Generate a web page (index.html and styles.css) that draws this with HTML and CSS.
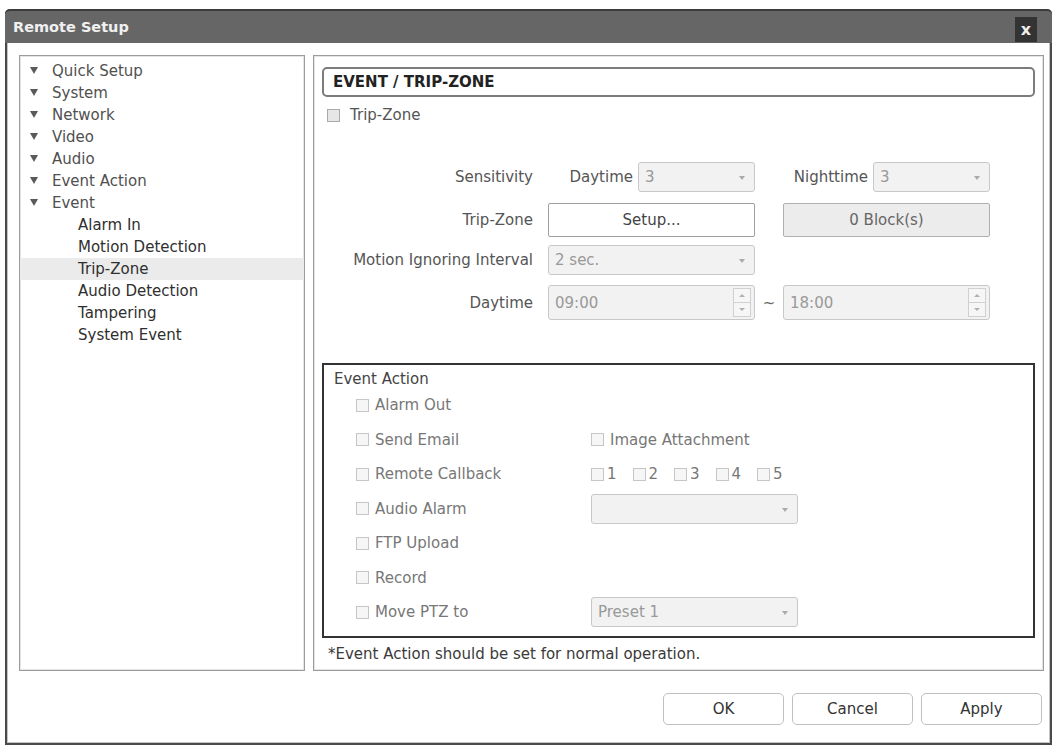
FILE: index.html
```html
<!DOCTYPE html>
<html lang="en">
<head>
    <meta charset="UTF-8">
    <title>Remote Setup</title>
    <link rel="stylesheet" href="styles.css">
</head>
<body>

    <div class="window">
        <div class="titlebar">
            <span class="title">Remote Setup</span>
            <span class="close">x</span>
        </div>

        <div class="content">
            <div class="panels">
                <ul class="tree">
                    <li class="group"><i class="arrow"></i>Quick Setup</li>
                    <li class="group"><i class="arrow"></i>System</li>
                    <li class="group"><i class="arrow"></i>Network</li>
                    <li class="group"><i class="arrow"></i>Video</li>
                    <li class="group"><i class="arrow"></i>Audio</li>
                    <li class="group"><i class="arrow"></i>Event Action</li>
                    <li class="group"><i class="arrow"></i>Event</li>
                    <li class="child">Alarm In</li>
                    <li class="child">Motion Detection</li>
                    <li class="child selected">Trip-Zone</li>
                    <li class="child">Audio Detection</li>
                    <li class="child">Tampering</li>
                    <li class="child">System Event</li>
                </ul>

                <div class="page">
                    <div class="page-head">EVENT / TRIP-ZONE</div>

                    <label class="check enable"><span class="box"></span>Trip-Zone</label>

                    <div class="form">
                        <div class="row row-sens">
                            <div class="lbl">Sensitivity</div>
                            <div class="cell">
                                <span class="sub">Daytime</span>
                                <div class="select short"><span>3</span><i class="caret"></i></div>
                            </div>
                            <div class="cell">
                                <span class="sub">Nighttime</span>
                                <div class="select short"><span>3</span><i class="caret"></i></div>
                            </div>
                        </div>

                        <div class="row row-zone">
                            <div class="lbl">Trip-Zone</div>
                            <div class="cell"><button class="btn-setup">Setup...</button></div>
                            <div class="cell"><div class="blocks">0 Block(s)</div></div>
                        </div>

                        <div class="row row-interval">
                            <div class="lbl">Motion Ignoring Interval</div>
                            <div class="cell">
                                <div class="select"><span>2 sec.</span><i class="caret"></i></div>
                            </div>
                        </div>

                        <div class="row row-time">
                            <div class="lbl">Daytime</div>
                            <div class="cell">
                                <div class="spin"><span>09:00</span><div class="spin-btns"><i class="up"></i><i class="down"></i></div></div>
                            </div>
                            <span class="tilde">~</span>
                            <div class="cell">
                                <div class="spin"><span>18:00</span><div class="spin-btns"><i class="up"></i><i class="down"></i></div></div>
                            </div>
                        </div>
                    </div>

                    <div class="action-box">
                        <div class="action-title">Event Action</div>

                        <div class="act">
                            <label class="check col1"><span class="box"></span>Alarm Out</label>
                        </div>
                        <div class="act">
                            <label class="check col1"><span class="box"></span>Send Email</label>
                            <label class="check"><span class="box"></span>Image Attachment</label>
                        </div>
                        <div class="act">
                            <label class="check col1"><span class="box"></span>Remote Callback</label>
                            <div class="nums">
                                <label class="check"><span class="box"></span>1</label>
                                <label class="check"><span class="box"></span>2</label>
                                <label class="check"><span class="box"></span>3</label>
                                <label class="check"><span class="box"></span>4</label>
                                <label class="check"><span class="box"></span>5</label>
                            </div>
                        </div>
                        <div class="act">
                            <label class="check col1"><span class="box"></span>Audio Alarm</label>
                            <div class="select wide"><span></span><i class="caret"></i></div>
                        </div>
                        <div class="act">
                            <label class="check col1"><span class="box"></span>FTP Upload</label>
                        </div>
                        <div class="act">
                            <label class="check col1"><span class="box"></span>Record</label>
                        </div>
                        <div class="act">
                            <label class="check col1"><span class="box"></span>Move PTZ to</label>
                            <div class="select wide"><span>Preset 1</span><i class="caret"></i></div>
                        </div>
                    </div>

                    <p class="note">*Event Action should be set for normal operation.</p>
                </div>
            </div>

            <div class="buttons">
                <button class="btn">OK</button>
                <button class="btn">Cancel</button>
                <button class="btn">Apply</button>
            </div>
        </div>
    </div>

</body>
</html>
```

FILE: styles.css
```css
* {
    margin: 0;
    padding: 0;
    box-sizing: border-box;
}

body {
    font-family: 'DejaVu Sans', Verdana, sans-serif;
    font-size: 15px;
    background-color: #fff;
    color: #444;
}

/* dialog frame */
.window {
    width: 1047px;
    height: 736px;
    margin: 9px 0 0 5px;
    border: 2px solid #4a4a4a;
    border-top: none;
    border-radius: 5px 5px 0 0;
    box-shadow: inset 1px 0 0 #c4c4c4, inset -1px 0 0 #c4c4c4, inset 0 -1px 0 #c4c4c4;
}

.titlebar {
    height: 34px;
    margin: 0 -2px;
    display: flex;
    align-items: center;
    justify-content: space-between;
    padding: 0 15px 0 8px;
    background-color: #666;
    border-top: 2px solid #3c3c3c;
    border-radius: 5px 5px 0 0;
}

.title {
    color: #f0f0f0;
    font-weight: bold;
    font-size: 14.5px;
}

.close {
    width: 22px;
    height: 25px;
    margin-top: 4px;
    display: flex;
    align-items: center;
    justify-content: center;
    background-color: #333;
    color: #eee;
    font-weight: bold;
    font-size: 16px;
}

.content {
    padding: 12px 6px 0 12px;
}

.panels {
    display: flex;
    gap: 8px;
    height: 616px;
}

/* menu tree */
.tree {
    width: 286px;
    list-style: none;
    padding-top: 4px;
    border: 1px solid #9c9c9c;
    box-shadow: inset 0 0 0 1px #e4e4e4;
}

.tree li {
    height: 22px;
    line-height: 22px;
    white-space: nowrap;
}

.tree .group {
    padding-left: 10px;
    color: #505050;
}

.tree .child {
    padding-left: 58px;
    color: #2f2f2f;
}

.tree .selected {
    background-color: #ebebeb;
}

.arrow {
    display: inline-block;
    width: 0;
    height: 0;
    margin-right: 14px;
    vertical-align: 2px;
    border-left: 4px solid transparent;
    border-right: 4px solid transparent;
    border-top: 7px solid #5a5a5a;
}

/* settings page */
.page {
    flex: 1;
    padding: 11px 8px 0 8px;
    border: 1px solid #9c9c9c;
    box-shadow: inset 0 0 0 1px #e4e4e4;
}

.page-head {
    height: 30px;
    line-height: 26px;
    padding-left: 9px;
    border: 2px solid #7c7c7c;
    border-radius: 5px;
    font-weight: bold;
    color: #222;
}

.check {
    display: flex;
    align-items: center;
    gap: 6px;
    color: #777;
    white-space: nowrap;
}

.box {
    width: 13px;
    height: 13px;
    flex: 0 0 13px;
    border: 1px solid #c6c6c6;
    background-color: #f6f6f6;
}

.enable {
    height: 20px;
    margin: 8px 0 0 5px;
    color: #555;
    gap: 10px;
}

.enable .box {
    border-color: #aaa;
    background-color: #e6e6e6;
}

.form {
    margin-top: 37px;
}

.row {
    display: flex;
    align-items: center;
}

.row-sens { height: 30px; }
.row-zone { height: 34px; margin-top: 11px; }
.row-interval { height: 30px; margin-top: 8px; }
.row-time { height: 35px; margin-top: 10px; }

.lbl {
    width: 211px;
    margin-right: 15px;
    text-align: right;
    color: #555;
}

.cell {
    width: 207px;
    height: 100%;
    display: flex;
    align-items: center;
    justify-content: flex-end;
    gap: 5px;
    margin-right: 28px;
}

.row-time .cell {
    margin-right: 0;
}

.sub {
    color: #555;
}

.select,
.spin {
    position: relative;
    height: 100%;
    width: 100%;
    display: flex;
    align-items: center;
    padding-left: 6px;
    border: 1px solid #c8c8c8;
    border-radius: 3px;
    background-color: #f2f2f2;
    color: #999;
}

.select.short {
    width: 117px;
    flex: 0 0 117px;
}

.select.wide {
    width: 207px;
    height: 30px;
}

.caret {
    position: absolute;
    right: 9px;
    top: 50%;
    margin-top: -1px;
    border-left: 3px solid transparent;
    border-right: 3px solid transparent;
    border-top: 4px solid #aaa;
}

.spin-btns {
    position: absolute;
    right: 3px;
    top: 2px;
    bottom: 2px;
    width: 18px;
    display: flex;
    flex-direction: column;
    border: 1px solid #d0d0d0;
    background-color: #f6f6f6;
}

.spin-btns i {
    flex: 1;
    display: flex;
    align-items: center;
    justify-content: center;
}

.spin-btns .up {
    border-bottom: 1px solid #d0d0d0;
}

.spin-btns .up::after,
.spin-btns .down::after {
    content: "";
    border-left: 3px solid transparent;
    border-right: 3px solid transparent;
}

.spin-btns .up::after {
    border-bottom: 3px solid #b0b0b0;
}

.spin-btns .down::after {
    border-top: 3px solid #b0b0b0;
}

.tilde {
    width: 28px;
    text-align: center;
    color: #666;
}

.btn-setup {
    width: 100%;
    height: 100%;
    font: inherit;
    color: #444;
    background-color: #fff;
    border: 1px solid #a0a0a0;
    border-radius: 2px;
}

.blocks {
    width: 100%;
    height: 100%;
    display: flex;
    align-items: center;
    justify-content: center;
    color: #666;
    background-color: #ececec;
    border: 1px solid #b0b0b0;
    border-radius: 2px;
}

/* event action group */
.action-box {
    margin-top: 43px;
    height: 275px;
    padding: 5px 0 0 10px;
    border: 2px solid #333;
}

.action-title {
    height: 18px;
    line-height: 18px;
    color: #444;
}

.act {
    height: 34.5px;
    display: flex;
    align-items: center;
    padding-left: 22px;
}

.act .col1 {
    width: 235px;
}

.nums {
    display: flex;
}

.nums .check {
    width: 41.5px;
    gap: 3px;
}

.note {
    margin: 6px 0 0 6px;
    line-height: 20px;
    color: #3a3a3a;
}

/* bottom buttons */
.buttons {
    display: flex;
    justify-content: flex-end;
    gap: 8px;
    margin-top: 22px;
    padding-right: 2px;
}

.btn {
    width: 121px;
    height: 32px;
    font: inherit;
    color: #333;
    background-color: #fff;
    border: 1px solid #c0c0c0;
    border-radius: 5px;
}
```
